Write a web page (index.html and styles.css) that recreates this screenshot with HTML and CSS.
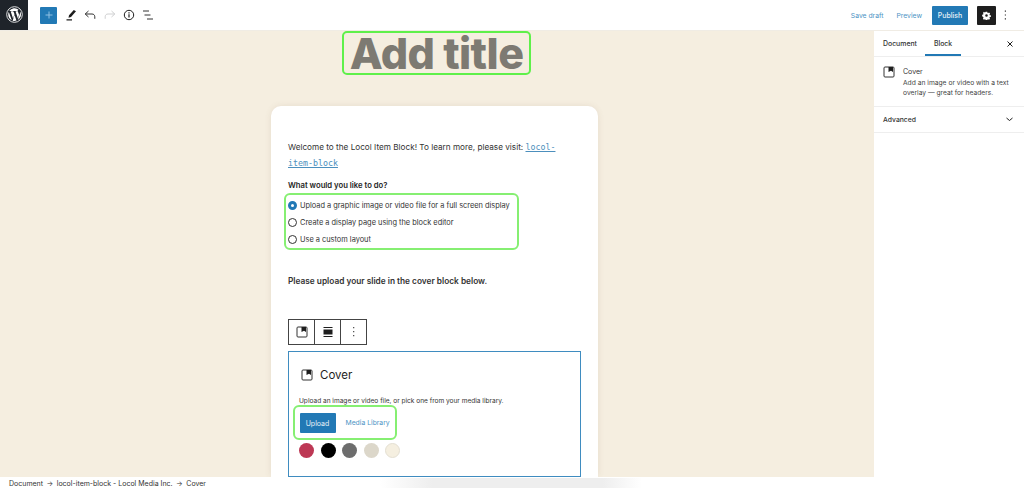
FILE: index.html
```html
<!DOCTYPE html>
<html lang="en">
<head>
    <meta charset="UTF-8">
    <title>Add title</title>
    <link rel="stylesheet" href="styles.css">
</head>
<body>
    <div class="topbar">
        <div class="wp-logo">
            <svg width="17" height="17" viewBox="0 0 20 20"><circle cx="10" cy="10" r="9.2" fill="none" stroke="#fff" stroke-width="1"/><path fill="#fff" d="M2.600 10c0 2.900 1.700 5.500 4.200 6.700L3.300 7c-.5.900-.7 1.900-.7 3zm12.400-.4c0-.9-.3-1.600-.6-2.100-.4-.6-.7-1.100-.7-1.700 0-.7.500-1.300 1.200-1.300h.1A7.400 7.400 0 0 0 3.800 5.900h.5c.8 0 2-.1 2-.1.400 0 .5.600.1.600 0 0-.4.100-.9.100l2.800 8.300 1.700-5-1.200-3.300c-.4 0-.8-.1-.8-.1-.4 0-.4-.6 0-.6 0 0 1.300.1 2 .1.800 0 2-.1 2-.1.400 0 .5.600.1.600 0 0-.4.100-.9.100l2.800 8.200.8-2.600c.3-1 .6-1.800.6-2.500zm-4.900 1-2.300 6.700a7.400 7.400 0 0 0 4.600-.1l-.1-.1zm6.500-4.300c0 .3.100.5.100.8 0 .8-.1 1.600-.6 2.800l-2.300 6.600a7.400 7.400 0 0 0 2.800-10.200z"/></svg>
        </div>
        <div class="tools">
            <button class="add-btn">
                <svg width="8" height="8" viewBox="0 0 8 8"><path d="M4 .5v7M.5 4h7" stroke="#8fc1e3" stroke-width="1"/></svg>
            </button>
            <svg class="tool" width="16" height="16" viewBox="0 0 16 16"><path fill="#1e1e1e" d="M10.800 3 13 4.300 8 10 5.500 10.800 6 8.300zM3.500 12.300h5.500v1.100H3.500z"/></svg>
            <svg class="tool" width="16" height="16" viewBox="0 0 16 16"><path fill="none" stroke="#333" stroke-width="1" d="M6.500 4 3.200 7l3.300 3M3.200 7H10c1.800 0 2.800 1.200 2.800 2.800v2"/></svg>
            <svg class="tool" width="16" height="16" viewBox="0 0 16 16"><path fill="none" stroke="#cfd0d1" stroke-width="1" d="M9.500 4l3.300 3-3.300 3M12.800 7H6C4.200 7 3.200 8.200 3.200 9.800v2"/></svg>
            <svg class="tool" width="16" height="16" viewBox="0 0 16 16"><circle cx="8" cy="8" r="4.700" fill="none" stroke="#1e1e1e" stroke-width="1"/><path fill="#1e1e1e" d="M7.400 7.200h1.200v3.400H7.400zM7.400 5.300h1.200v1.200H7.400z"/></svg>
            <svg class="tool" width="16" height="16" viewBox="0 0 16 16"><path stroke="#333" stroke-width="1" d="M3 4h6M4.500 8h6M7 12h6"/></svg>
        </div>
        <div class="actions">
            <a class="link">Save draft</a>
            <a class="link">Preview</a>
            <button class="publish">Publish</button>
            <button class="settings">
                <svg width="9" height="9" viewBox="0 0 14 14"><path fill="#fff" fill-rule="evenodd" d="M5.800 1h2.400l.3 1.700 1 .5 1.500-.9 1.600 1.700-.9 1.400.4 1.100 1.700.3v2.400l-1.700.3-.4 1-.1.100.9 1.400-1.600 1.700-1.500-.9-1 .4-.3 1.700H5.800l-.3-1.700-1-.4-1.500.9-1.600-1.700.9-1.400-.4-1.100L.2 8.200V5.800l1.700-.3.400-1.100-.9-1.400L3 1.300l1.500.9 1-.5zM7 5a2 2 0 1 0 0 4 2 2 0 0 0 0-4z"/></svg>
            </button>
            <svg class="more" width="3" height="10" viewBox="0 0 3 10"><path fill="#333" d="M.8 .5h1.200v1.200H.8zM.8 4.400h1.200v1.200H.8zM.8 8.300h1.200v1.200H.8z"/></svg>
        </div>
    </div>

    <div class="main">
        <div class="canvas">
            <div class="title-row">
                <h1 class="post-title">Add title</h1>
            </div>
            <div class="page-card">
                <p class="welcome">Welcome to the Locol Item Block! To learn more, please visit: <a class="code-link">locol-item-block</a></p>
                <p class="question">What would you like to do?</p>
                <div class="options">
                    <label class="option"><span class="radio checked"></span>Upload a graphic image or video file for a full screen display</label>
                    <label class="option"><span class="radio"></span>Create a display page using the block editor</label>
                    <label class="option"><span class="radio"></span>Use a custom layout</label>
                </div>
                <p class="upload-note">Please upload your slide in the cover block below.</p>
                <div class="block-toolbar">
                    <div class="block-tool">
                        <svg width="14" height="14" viewBox="0 0 14 14"><rect x="2" y="2" width="10" height="10" rx="1" fill="none" stroke="#333" stroke-width="1"/><path fill="#1e1e1e" d="M6.500 2h4.500v5L9 5.800 6.500 7z"/></svg>
                    </div>
                    <div class="block-tool">
                        <svg width="14" height="14" viewBox="0 0 14 14"><path fill="#1e1e1e" d="M2.500 2h9v1h-9zM2.500 4.500h9v5h-9zM2.500 11h9v1h-9z"/></svg>
                    </div>
                    <div class="block-tool">
                        <svg width="4" height="12" viewBox="0 0 4 12"><path fill="#555" d="M1 1h1.300v1.300H1zM1 5h1.300v1.300H1zM1 9h1.300v1.300H1z"/></svg>
                    </div>
                </div>
                <div class="cover-block">
                    <div class="cover-head">
                        <svg width="14" height="14" viewBox="0 0 14 14"><rect x="2" y="2" width="10" height="10" rx="1" fill="none" stroke="#333" stroke-width="1"/><path fill="#1e1e1e" d="M6.500 2h4.500v5L9 5.800 6.500 7z"/></svg>
                        <span class="cover-name">Cover</span>
                    </div>
                    <p class="cover-text">Upload an image or video file, or pick one from your media library.</p>
                    <div class="cover-buttons">
                        <button class="upload">Upload</button>
                        <a class="link media">Media Library</a>
                    </div>
                    <div class="swatches">
                        <span class="swatch crimson"></span>
                        <span class="swatch black"></span>
                        <span class="swatch grey"></span>
                        <span class="swatch stone"></span>
                        <span class="swatch cream"></span>
                    </div>
                </div>
            </div>
        </div>

        <div class="sidebar">
            <div class="tabs">
                <span class="tab">Document</span>
                <span class="tab active">Block</span>
                <svg class="close" width="8" height="8" viewBox="0 0 8 8"><path d="M1.500 1.500l5 5M6.500 1.500l-5 5" stroke="#1e1e1e" stroke-width="1"/></svg>
            </div>
            <div class="block-card">
                <svg class="card-icon" width="14" height="14" viewBox="0 0 14 14"><rect x="2" y="2" width="10" height="10" rx="1" fill="none" stroke="#333" stroke-width="1"/><path fill="#1e1e1e" d="M6.500 2h4.500v5L9 5.800 6.500 7z"/></svg>
                <div>
                    <div class="block-name">Cover</div>
                    <div class="block-desc">Add an image or video with a text overlay — great for headers.</div>
                </div>
            </div>
            <div class="panel-row">
                <span>Advanced</span>
                <svg width="7" height="5" viewBox="0 0 7 5"><path d="M.5 1l3 2.500 3-2.500" fill="none" stroke="#1e1e1e" stroke-width="1"/></svg>
            </div>
        </div>
    </div>

    <div class="footer">
        <span>Document</span><span class="arrow">→</span><span>locol-item-block - Locol Media Inc.</span><span class="arrow">→</span><span>Cover</span>
        <div class="footer-fade"></div>
    </div>
</body>
</html>
```

FILE: styles.css
```css
* {
    margin: 0;
    padding: 0;
    box-sizing: border-box;
    font-family: Inter, 'Liberation Sans', sans-serif;
}

body {
    width: 1024px;
    height: 488px;
    overflow: hidden;
    background-color: #fff;
    color: #1e1e1e;
    display: flex;
    flex-direction: column;
}

button {
    border: none;
    display: flex;
    align-items: center;
    justify-content: center;
}

.topbar {
    height: 31px;
    display: flex;
    align-items: center;
    background-color: #fff;
    border-bottom: 1px solid #f0ece4;
}

.wp-logo {
    width: 28px;
    height: 31px;
    background-color: #1f242a;
    display: flex;
    align-items: center;
    justify-content: center;
    margin-top: -1px;
}

.tools {
    display: flex;
    align-items: center;
    margin-left: 12px;
}

.add-btn {
    width: 17px;
    height: 17px;
    background-color: #2279b5;
    border-radius: 1px;
    margin-right: 6px;
}

.tool {
    margin-right: 3.300px;
}

.actions {
    margin-left: auto;
    display: flex;
    align-items: center;
}

.link {
    color: #4c93c4;
    font-size: 6.800px;
}

.actions .link {
    margin-right: 13px;
}

.publish {
    width: 36px;
    height: 19px;
    background-color: #2279b5;
    color: #e8f2f8;
    font-size: 7px;
    font-weight: 500;
    border-radius: 1px;
    margin-right: 9px;
    margin-left: -3px;
}

.settings {
    width: 19px;
    height: 19px;
    background-color: #1e1e1e;
    border-radius: 1px;
}

.more {
    margin: 0 17px 0 8px;
}

.main {
    flex: 1;
    display: flex;
    min-height: 0;
}

.canvas {
    width: 874px;
    background-color: #f5eee0;
    display: flex;
    flex-direction: column;
}

.title-row {
    display: flex;
    justify-content: center;
    height: 75px;
    padding-right: 1px;
}

.post-title {
    width: 189px;
    height: 44px;
    border: 2px solid #5ff04a;
    border-radius: 5px;
    color: #7d7a72;
    font-size: 43px;
    font-weight: 800;
    letter-spacing: -0.600px;
    line-height: 40px;
    text-align: center;
}

.page-card {
    width: 327px;
    margin-left: 271px;
    padding: 34px 17px 0 17px;
    background-color: #fff;
    border-radius: 10px 10px 0 0;
    box-shadow: 0 0 6px rgba(120, 100, 70, 0.12);
    flex: 1;
    min-height: 0;
}

.welcome {
    max-width: 270px;
    font-size: 8.200px;
    line-height: 15.500px;
    color: #333;
}

.code-link {
    font-family: 'DejaVu Sans Mono', monospace;
    font-size: 8.300px;
    color: #4c8fbd;
    text-decoration: underline;
}

.question {
    margin-top: 9px;
    font-size: 7.700px;
    font-weight: 600;
    line-height: 12px;
}

.options {
    width: 235px;
    height: 57px;
    margin: 1px 0 0 -4px;
    padding: 2px 0 0 2px;
    border: 2px solid #86ef72;
    border-radius: 6px;
}

.option {
    height: 17px;
    display: flex;
    align-items: center;
    font-size: 7.400px;
    color: #333;
}

.radio {
    width: 9px;
    height: 9px;
    border: 1px solid #333;
    border-radius: 50%;
    margin-right: 3px;
    flex-shrink: 0;
}

.radio.checked {
    border: 3px solid #2279b5;
    background-color: #fff;
}

.upload-note {
    margin-top: 25px;
    font-size: 8.300px;
    font-weight: 600;
    line-height: 12px;
    color: #333;
}

.block-toolbar {
    display: flex;
    width: 79px;
    height: 26px;
    margin-top: 32px;
    border: 1px solid #444;
}

.block-tool {
    flex: 1;
    display: flex;
    align-items: center;
    justify-content: center;
    border-right: 1px solid #444;
}

.block-tool:last-child {
    border-right: none;
}

.cover-block {
    width: 293px;
    height: 126px;
    margin-top: 6px;
    padding: 16px 11px 0 11px;
    border: 1px solid #3f8cc0;
}

.cover-head {
    display: flex;
    align-items: center;
    gap: 6px;
}

.cover-name {
    font-size: 11.500px;
}

.cover-text {
    margin-top: 15px;
    margin-left: -1px;
    font-size: 6.550px;
    color: #333;
}

.cover-buttons {
    width: 104px;
    height: 35px;
    margin: 0 0 0 -7px;
    padding: 6px 0 0 4.500px;
    display: flex;
    gap: 10px;
    border: 2px solid #86ef72;
    border-radius: 6px;
}

.upload {
    width: 36px;
    height: 20px;
    background-color: #2279b5;
    color: #e8f2f8;
    font-size: 7px;
    border-radius: 1px;
}

.media {
    line-height: 20px;
}

.swatches {
    display: flex;
    gap: 6.500px;
    margin: 3px 0 0 -1px;
}

.swatch {
    width: 15px;
    height: 15px;
    border-radius: 50%;
}

.crimson {
    background-color: #bd3854;
}

.black {
    background-color: #000;
}

.grey {
    background-color: #6d6d6d;
}

.stone {
    background-color: #dcd7ca;
}

.cream {
    background-color: #f5efe0;
    border: 1px solid #e4dfd2;
}

.sidebar {
    width: 150px;
    background-color: #fff;
}

.tabs {
    height: 26px;
    padding-left: 8px;
    display: flex;
    align-items: stretch;
    gap: 16px;
    border-bottom: 1px solid #eee;
}

.tab {
    font-weight: 500;
    font-size: 6.900px;
    line-height: 25px;
    color: #333;
    padding: 0 1px;
}

.tab.active {
    box-shadow: inset 0 -2px 0 #2279b5;
    padding: 0 9px;
    margin-left: -9px;
}

.close {
    margin: 9px 10px 0 auto;
}

.block-card {
    padding: 9px 8px 9px 8px;
    height: 50px;
    display: flex;
    gap: 7px;
    border-bottom: 1px solid #eee;
}

.card-icon {
    flex-shrink: 0;
    margin-top: -1px;
}

.block-name {
    font-size: 7px;
    line-height: 11px;
    color: #333;
}

.block-desc {
    font-size: 6.700px;
    line-height: 10px;
    margin-top: 1px;
    color: #444;
}

.panel-row {
    height: 26px;
    padding: 0 11px 0 9px;
    display: flex;
    align-items: center;
    justify-content: space-between;
    font-size: 6.800px;
    font-weight: 500;
    color: #333;
    border-bottom: 1px solid #eee;
}

.footer {
    height: 11px;
    padding-left: 9px;
    display: flex;
    align-items: flex-end;
    font-size: 7px;
    line-height: 8px;
    color: #333;
    position: relative;
    background-color: #fff;
}

.arrow {
    margin: 0 3.500px;
}

.footer-fade {
    position: absolute;
    left: 380px;
    top: 1px;
    width: 262px;
    height: 10px;
    background: linear-gradient(90deg, #fff, #eee 20%, #eee 85%, #fff);
}
```
